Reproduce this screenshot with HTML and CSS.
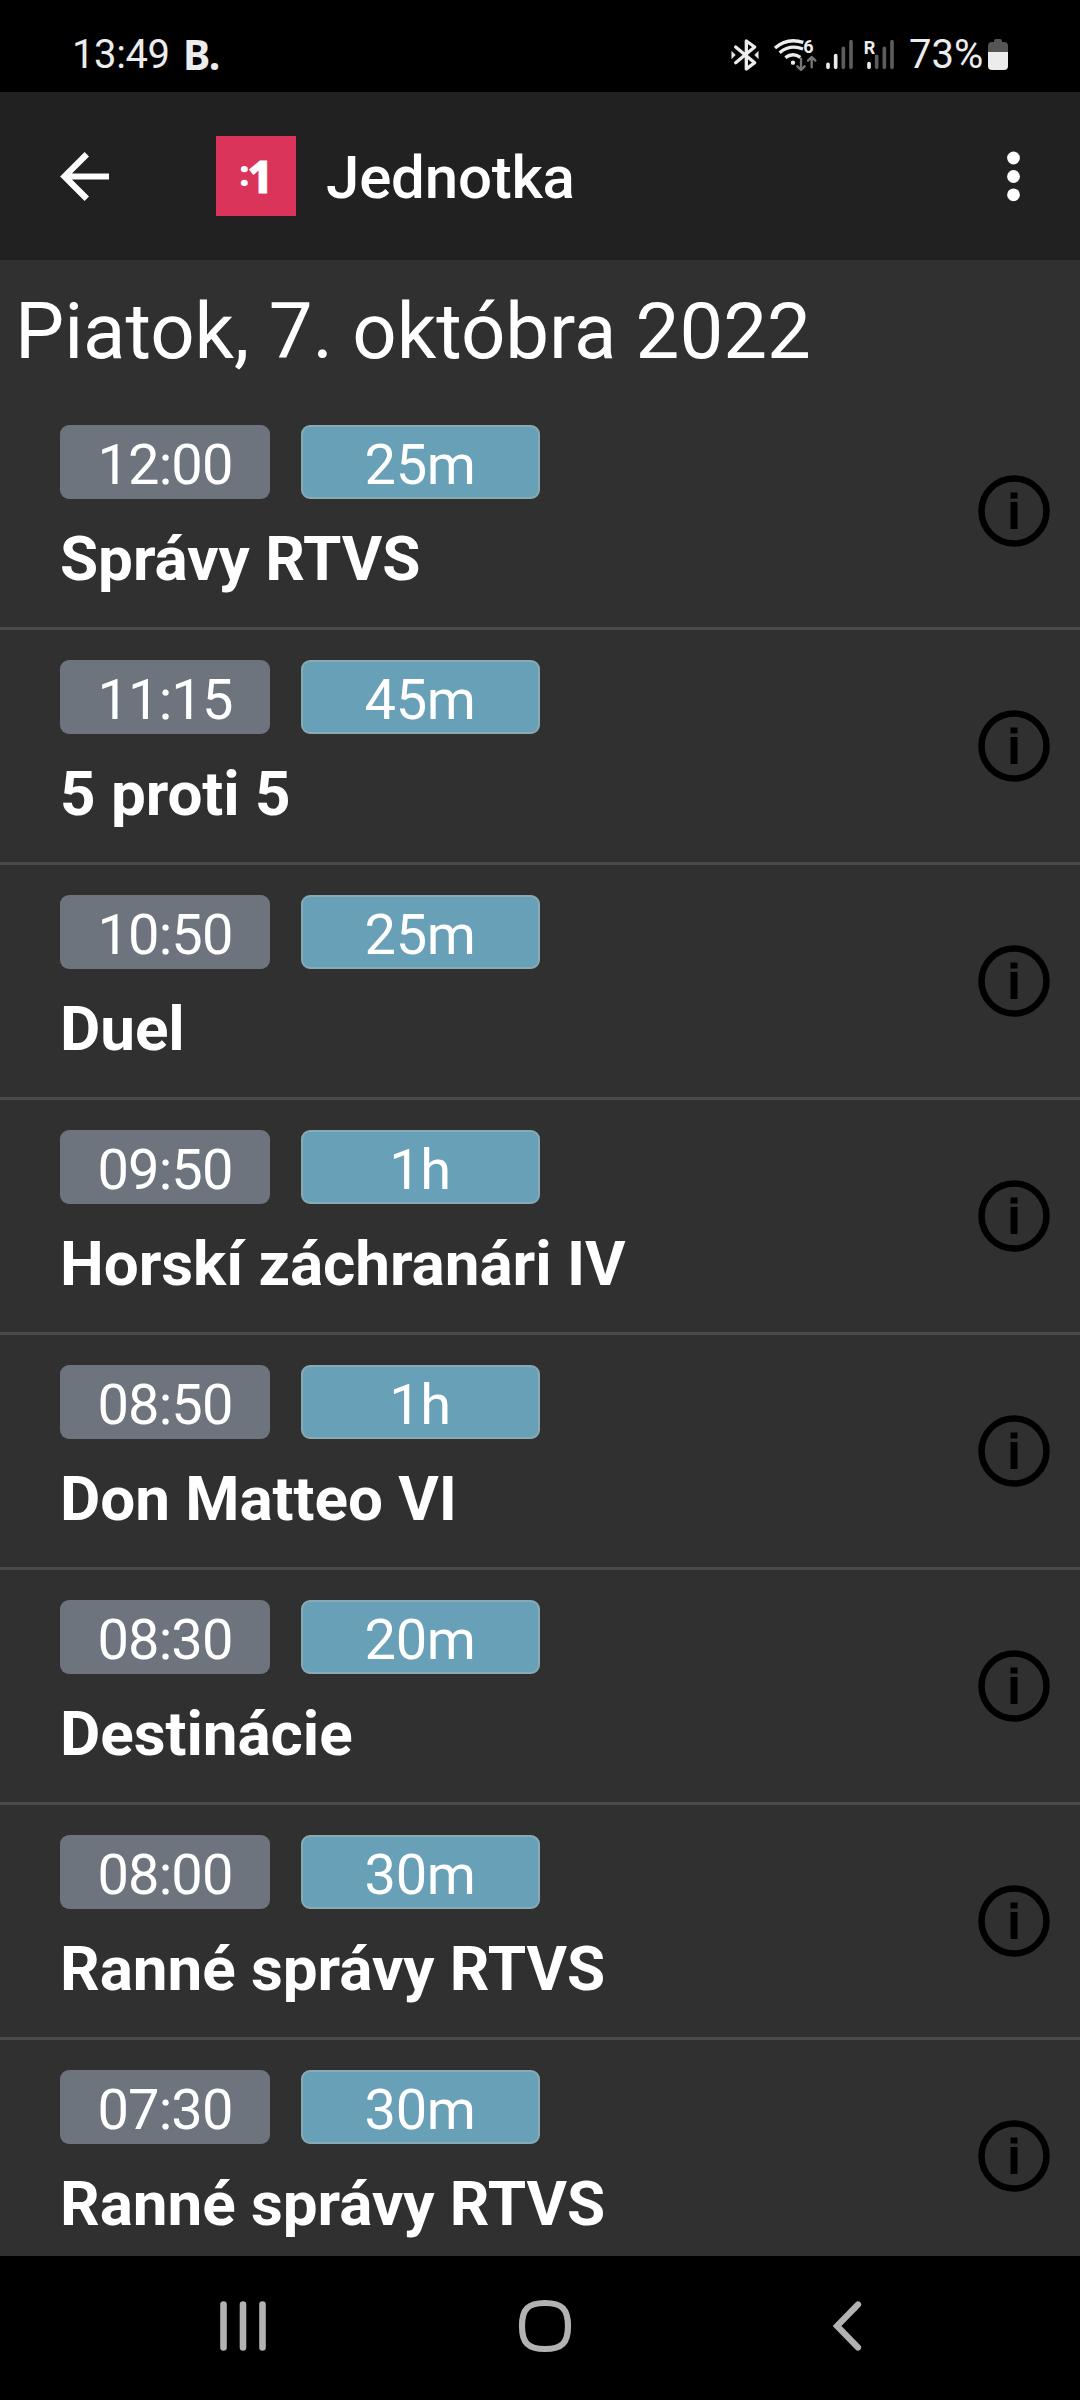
FILE: index.html
```html
<!DOCTYPE html>
<html lang="sk">
<head>
<meta charset="utf-8">
<title>Jednotka</title>
<link rel="stylesheet" href="styles.css">
</head>
<body>
<div class="screen">
  <div class="status">
    <span class="clock">13:49</span>
    <span class="notif">B.</span>
    <svg class="signals" width="166" height="38" viewBox="90 48 498 114" fill="none" stroke="#ececec" stroke-linecap="round" stroke-linejoin="round">
      <g stroke-width="10">
        <path d="M107 81 L164 128 L139 147 V63 L164 81 L107 128"/>
      </g>
      <path d="M96 95 L106 105 L96 115 Z M174 95 L164 105 L174 115 Z" fill="#ececec" stroke="#ececec" stroke-width="2"/>
      <g stroke-width="10" stroke-linecap="butt">
        <path d="M225 84 Q261 52 310 67"/>
        <path d="M239 98 Q270 72 309 87"/>
        <path d="M256 113 Q278 96 301 112"/>
      </g>
      <circle cx="279" cy="128" r="6.500" fill="#ececec" stroke="none"/>
      <path d="M303 116 V149 M292 139 L303 150 L314 139 M335 142 V112 M324 122 L335 111 L346 122" stroke="#777" stroke-width="7"/>
      <text class="badge" x="310" y="99">6</text>
      <g stroke-width="11">
        <path d="M384 133 V142 M407 107 V142 M507 131 V142"/>
        <path stroke="#5c5c5c" d="M430 85 V142 M453 65 V142 M530 109 V142 M553 85 V142 M576 65 V142"/>
      </g>
      <text class="badge" x="491" y="101">R</text>
    </svg>
    <span class="percent">73%</span>
    <svg class="battery" width="20" height="31" viewBox="0 0 20 31">
      <path d="M6 2 Q6 0 8 0 H12 Q14 0 14 2 V3 H16 Q20 3 20 7 V14 H0 V7 Q0 3 4 3 H6 Z" fill="#555"/>
      <path d="M0 13 H20 V27 Q20 31 16 31 H4 Q0 31 0 27 Z" fill="#ececec"/>
    </svg>
  </div>
  <div class="toolbar">
    <svg class="back" width="50" height="50" viewBox="0 0 50 50" fill="none" stroke="#fff" stroke-width="6.200"><path d="M49 25.500 H5 M26.800 3.200 L4.500 25.500 L26.800 47.800"/></svg>
    <div class="logo"><span class="colon">:</span><span class="one">1</span></div>
    <h1 class="channel">Jednotka</h1>
    <svg class="more" width="14" height="50" viewBox="0 0 14 50" fill="#fff"><circle cx="7.500" cy="7" r="6.400"/><circle cx="7.500" cy="25.500" r="6.400"/><circle cx="7.500" cy="43.800" r="6.400"/></svg>
  </div>
  <div class="content">
    <h2 class="date">Piatok, 7. októbra 2022</h2>
    <div class="row"><div><div class="pills"><span class="time">12:00</span><span class="length">25m</span></div><div class="name">Správy RTVS</div></div><svg class="info" viewBox="0 0 72 72"><use href="#info"/></svg></div>
    <div class="row"><div><div class="pills"><span class="time">11:15</span><span class="length">45m</span></div><div class="name">5 proti 5</div></div><svg class="info" viewBox="0 0 72 72"><use href="#info"/></svg></div>
    <div class="row"><div><div class="pills"><span class="time">10:50</span><span class="length">25m</span></div><div class="name">Duel</div></div><svg class="info" viewBox="0 0 72 72"><use href="#info"/></svg></div>
    <div class="row"><div><div class="pills"><span class="time">09:50</span><span class="length">1h</span></div><div class="name">Horskí záchranári IV</div></div><svg class="info" viewBox="0 0 72 72"><use href="#info"/></svg></div>
    <div class="row"><div><div class="pills"><span class="time">08:50</span><span class="length">1h</span></div><div class="name">Don Matteo VI</div></div><svg class="info" viewBox="0 0 72 72"><use href="#info"/></svg></div>
    <div class="row"><div><div class="pills"><span class="time">08:30</span><span class="length">20m</span></div><div class="name">Destinácie</div></div><svg class="info" viewBox="0 0 72 72"><use href="#info"/></svg></div>
    <div class="row"><div><div class="pills"><span class="time">08:00</span><span class="length">30m</span></div><div class="name">Ranné správy RTVS</div></div><svg class="info" viewBox="0 0 72 72"><use href="#info"/></svg></div>
    <div class="row"><div><div class="pills"><span class="time">07:30</span><span class="length">30m</span></div><div class="name">Ranné správy RTVS</div></div><svg class="info" viewBox="0 0 72 72">
      <g id="info"><circle cx="36" cy="36" r="32.500" fill="none" stroke="#000" stroke-width="6.500"/><path d="M32.500 17.500 h7 v6 h-7 Z M32.500 27 h7 v27 h-7 Z"/></g></svg></div>
  </div>
  <div class="nav">
    <svg width="44" height="54" viewBox="0 0 44 54" fill="none" stroke="#b2b2b2" stroke-width="6.600" stroke-linecap="round"><path d="M3.500 5.500 V48.500 M23 5.500 V48.500 M42.500 5.500 V48.500"/></svg>
    <svg class="home" width="54" height="54" viewBox="0 0 54 54" fill="none" stroke="#b2b2b2" stroke-width="6.200"><path d="M27 4 C44 4 50 10 50 27 C50 44 44 50 27 50 C10 50 4 44 4 27 C4 10 10 4 27 4 Z"/></svg>
    <svg width="30" height="54" viewBox="0 0 30 54" fill="none" stroke="#b2b2b2" stroke-width="6.200" stroke-linecap="round"><path d="M26 5.500 L5 27 L26 48.500"/></svg>
  </div>
</div>
</body>
</html>
```

FILE: styles.css
```css
* { box-sizing: border-box; }
body { margin: 0; background: #000; font-family: Roboto, sans-serif; color: #fff; }
h1, h2 { margin: 0; }
svg { display: block; flex: none; overflow: visible; }
.screen { width: 1080px; height: 2400px; display: flex; flex-direction: column; overflow: hidden; }

.status { height: 92px; flex: none; display: flex; align-items: center; padding: 17px 72px 0 72px; color: #ececec; font-size: 40px; line-height: 48px; white-space: nowrap; }
.clock { width: 111px; flex: none; letter-spacing: -0.4px; }
.notif { padding-bottom: 2px; font-family: "Noto Sans", sans-serif; font-weight: 700; font-size: 41px; letter-spacing: -1px; }
.signals { margin-left: auto; }
.percent { margin-left: 13px; width: 79px; flex: none; }
.badge { font: 700 54px Roboto, sans-serif; fill: #ececec; stroke: none; }

.toolbar { height: 168px; flex: none; background: #212121; display: flex; align-items: center; padding: 0 60px; }
.logo { width: 80px; height: 80px; margin-left: 106px; background: #da345b; display: flex; justify-content: center; align-items: flex-start; font-family: "Noto Sans", sans-serif; font-weight: 800; line-height: 80px; }
.colon { font-size: 36px; line-height: 74px; }
.one { margin-left: -2px; font-size: 44px; line-height: 80px; -webkit-text-stroke: 0.8px #fff; }
.channel { margin-left: 30px; padding-top: 4px; font-size: 60px; font-weight: 500; line-height: 70px; letter-spacing: -0.2px; }
.more { margin-left: auto; }

.content { flex: 1; min-height: 0; overflow: hidden; background: #303030; }
.date { height: 135px; padding-left: 15px; font-size: 78px; font-weight: 400; line-height: 143px; letter-spacing: -0.05px; white-space: nowrap; }
.row { height: 235px; border-bottom: 3px solid #4a4a4a; display: flex; justify-content: space-between; padding: 30px 30px 0 60px; }
.pills { display: flex; gap: 30.5px; font-size: 56px; line-height: 80px; text-align: center; }
.time { width: 210px; height: 74px; border-radius: 9px; background: #6d747d; letter-spacing: -0.9px; }
.length { width: 239px; height: 74px; border-radius: 9px; background: #68a0b7; border: 2px solid #87aab4; line-height: 76px; letter-spacing: -0.4px; }
.name { margin-top: 24px; font-size: 62px; font-weight: 700; line-height: 72px; letter-spacing: -0.05px; white-space: nowrap; }
.info { width: 72px; height: 72px; margin-top: 50px; }

.nav { height: 144px; flex: none; background: #000; display: flex; justify-content: space-between; align-items: center; padding: 0 218px 4px 220px; }
.home { margin-left: -7px; }
```
